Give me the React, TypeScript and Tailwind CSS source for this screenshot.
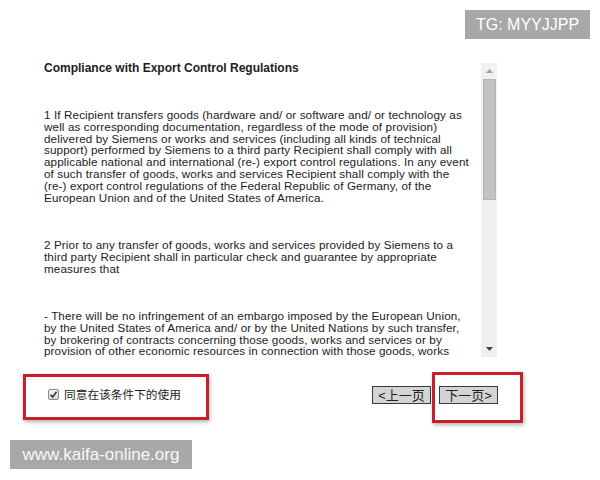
import React from "react";

const body = "font-['Liberation_Sans',Arial,sans-serif]";

export default function App() {
  return (
    <div className={`relative w-[600px] h-[480px] overflow-hidden bg-white text-[#1c1c1c] ${body}`}>
      {/* TG badge */}
      <div className="absolute left-[465px] top-[10px] w-[125px] h-[29px] bg-[#a8a8a8] flex items-center justify-center text-white text-[16px] font-['Liberation_Sans',Arial,sans-serif]">
        TG: MYYJJPP
      </div>

      <div className="pt-[61px] pl-[44px] flex">
        <div className="w-[430px] h-[297px] overflow-hidden text-[11.7px] tracking-[0.1px] leading-[11.8px] whitespace-nowrap">
          <div className="font-bold text-[12px] tracking-normal leading-[14px]">Compliance with Export Control Regulations</div>
          <p className="mt-[34px]">
            1 If Recipient transfers goods (hardware and/ or software and/ or technology as<br />
            well as corresponding documentation, regardless of the mode of provision)<br />
            delivered by Siemens or works and services (including all kinds of technical<br />
            support) performed by Siemens to a third party Recipient shall comply with all<br />
            applicable national and international (re-) export control regulations. In any event<br />
            of such transfer of goods, works and services Recipient shall comply with the<br />
            (re-) export control regulations of the Federal Republic of Germany, of the<br />
            European Union and of the United States of America.
          </p>
          <p className="mt-[35.6px]">
            2 Prior to any transfer of goods, works and services provided by Siemens to a<br />
            third party Recipient shall in particular check and guarantee by appropriate<br />
            measures that
          </p>
          <p className="mt-[35.6px]">
            - There will be no infringement of an embargo imposed by the European Union,<br />
            by the United States of America and/ or by the United Nations by such transfer,<br />
            by brokering of contracts concerning those goods, works and services or by<br />
            provision of other economic resources in connection with those goods, works
          </p>
        </div>
        {/* scrollbar */}
        <div className="ml-[7px] mt-[2px] w-[16px] h-[294px] bg-[#f0f0f0] flex flex-col items-center">
          <div className="h-[16px] w-full flex items-center justify-center">
            <svg width="7" height="4" viewBox="0 0 7 4"><path d="M3.5 0 L7 4 L0 4 Z" fill="#a0a0a0" /></svg>
          </div>
          <div className="w-[13px] h-[121px] bg-[#c2c2c2] border border-[#b4b4b4]" />
          <div className="flex-1" />
          <div className="h-[16px] w-full flex items-center justify-center">
            <svg width="7" height="4" viewBox="0 0 7 4"><path d="M0 0 L7 0 L3.5 4 Z" fill="#404040" /></svg>
          </div>
        </div>
      </div>

      {/* bottom row */}
      <div className="mt-[28px] pl-[48px] pr-[102px] flex items-center justify-between h-[18px]">
        <div className="flex items-center">
          <span className="w-[11px] h-[11px] border border-[#8a8a8a] rounded-[2px] bg-gradient-to-b from-[#f4f4f4] to-[#d8d8d8] flex items-center justify-center">
            <svg width="9" height="9" viewBox="0 0 9 9"><path d="M1.5 4.8 L3.6 7 L7.6 1.8" stroke="#333" strokeWidth="1.6" fill="none" /></svg>
          </span>
          <span className="ml-[5px] text-[11.7px] font-['Liberation_Sans','Noto_Sans_CJK_SC',sans-serif]">同意在该条件下的使用</span>
        </div>
        <div className="flex gap-[8px]">
          <button className="w-[59px] h-[18px] bg-[#d4d4d4] border border-[#3a3a3a] text-[13px] leading-none flex items-center justify-center font-['Liberation_Sans','Noto_Sans_CJK_SC',sans-serif] text-[#222]">&lt;上一页</button>
          <button className="w-[59px] h-[18px] bg-[#d4d4d4] border border-[#3a3a3a] text-[13px] leading-none flex items-center justify-center font-['Liberation_Sans','Noto_Sans_CJK_SC',sans-serif] text-[#222]">下一页&gt;</button>
        </div>
      </div>

      {/* red highlight boxes */}
      <div className="absolute left-[23px] top-[374px] w-[186px] h-[46px] border-[3px] border-[#c8202a] shadow-[1px_2px_4px_rgba(0,0,0,0.3)]" />
      <div className="absolute left-[432px] top-[372px] w-[91px] h-[51px] border-[3px] border-[#c8202a] shadow-[1px_2px_4px_rgba(0,0,0,0.3)]" />

      {/* watermark */}
      <div className="absolute left-[10px] top-[440px] w-[182px] h-[29px] bg-[#a8a8a8] flex items-center justify-center text-[#f8f8f8] text-[17px] font-['Liberation_Sans',Arial,sans-serif]">
        www.kaifa-online.org
      </div>
    </div>
  );
}
